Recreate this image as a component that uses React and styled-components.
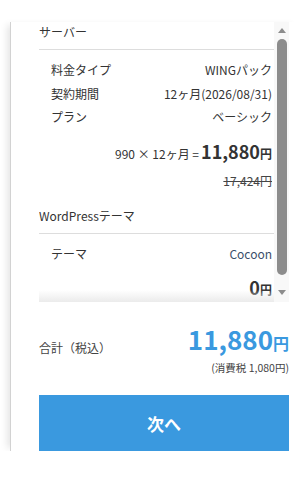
import React from "react";
import styled, { createGlobalStyle } from "styled-components";

const GlobalStyle = createGlobalStyle`
	html, body {
		margin: 0;
		padding: 0;
		background: #fff;
	}
	body {
		font-family: "Noto Sans CJK JP", "Noto Sans", sans-serif;
		color: #333;
		overflow: hidden;
		padding-top: 22px;
	}
`;

const Panel = styled.div`
	margin-left: 10px;
	width: 290px;
	box-sizing: border-box;
	padding: 0 11px 0 28px;
	border-left: 1px solid #d2d2d2;
	box-shadow: -6px 0 7px -3px rgba(0, 0, 0, 0.1);
	display: flex;
	flex-direction: column;
`;

const ScrollWrap = styled.div`
	display: flex;
	height: 280px;
`;

const Viewport = styled.div`
	position: relative;
	flex: 1;
	overflow: hidden;
`;

const Fade = styled.div`
	position: absolute;
	left: 0;
	right: 0;
	bottom: 0;
	height: 12px;
	background: linear-gradient(to bottom, rgba(235, 235, 235, 0), #ebebeb);
	pointer-events: none;
`;

const Track = styled.div`
	width: 15px;
	background: #f8f8f8;
	display: flex;
	flex-direction: column;
	align-items: center;
`;

const Arrow = styled.div`
	width: 0;
	height: 0;
	border-left: 4.5px solid transparent;
	border-right: 4.5px solid transparent;
	${(p) =>
		p.$down
			? "border-top: 5px solid #8c8c8c; margin-top: auto; margin-bottom: 7px;"
			: "border-bottom: 5px solid #8c8c8c; margin-top: 6px;"}
`;

const Thumb = styled.div`
	margin-top: 6px;
	width: 10px;
	height: 236px;
	border-radius: 5px;
	background: #8c8c8c;
`;

const Section = styled.section`
	margin-top: ${(p) => p.$top || 0}px;
`;

const SectionTitle = styled.div`
	font-size: 12px;
	line-height: 20px;
	padding-bottom: 7px;
	border-bottom: 1px solid #ddd;
`;

const Rows = styled.div`
	padding: 8px 2px 0 12px;
`;

const Row = styled.div`
	display: flex;
	justify-content: space-between;
	font-size: 12px;
	line-height: 23.5px;
`;

const Value = styled.span`
	color: ${(p) => (p.$accent ? "#3b4f6b" : "#333")};
`;

const PriceLine = styled.div`
	text-align: right;
	padding-right: 2px;
	margin-top: ${(p) => p.$top || 0}px;
	line-height: 24px;
	font-size: 12px;
`;

const Formula = styled.span`
	font-size: 12px;
	margin-right: 2px;
`;

const Amount = styled.span`
	font-size: 18px;
	font-weight: 700;
`;

const Yen = styled.span`
	font-size: 12px;
	font-weight: 700;
	line-height: 1;
`;

const OldPrice = styled.div`
	text-align: right;
	padding-right: 2px;
	margin-top: 7px;
	font-size: 12px;
	line-height: 16px;
	text-decoration: line-through;
	color: #444;
`;

const Total = styled.div`
	display: flex;
	justify-content: space-between;
	align-items: center;
	margin-top: 21px;
`;

const TotalLabel = styled.div`
	font-size: 12px;
	color: #444;
	margin-top: -5px;
`;

const TotalRight = styled.div`
	text-align: right;
`;

const BigPrice = styled.div`
	color: #3a99df;
	font-weight: 700;
	line-height: 32px;
	font-size: 26px;
`;

const BigYen = styled.span`
	font-size: 16px;
	line-height: 1;
`;

const Tax = styled.div`
	margin-top: 4px;
	font-size: 10.5px;
	line-height: 18px;
	color: #444;
`;

const NextButton = styled.button`
	margin-top: 18px;
	height: 56px;
	width: 100%;
	flex-shrink: 0;
	border: none;
	background: #3a99df;
	color: #fff;
	font-family: inherit;
	font-size: 17px;
	font-weight: 700;
	cursor: pointer;
`;

export default function App() {
	return (
		<>
			<GlobalStyle />
			<Panel>
				<ScrollWrap>
					<Viewport>
						<Section>
							<SectionTitle>サーバー</SectionTitle>
							<Rows>
								<Row>
									<span>料金タイプ</span>
									<Value>WINGパック</Value>
								</Row>
								<Row>
									<span>契約期間</span>
									<Value>12ヶ月(2026/08/31)</Value>
								</Row>
								<Row>
									<span>プラン</span>
									<Value>ベーシック</Value>
								</Row>
							</Rows>
							<PriceLine $top={10.5}>
								<Formula>990 × 12ヶ月 =</Formula>
								<Amount>11,880</Amount>
								<Yen>円</Yen>
							</PriceLine>
							<OldPrice>17,424円</OldPrice>
						</Section>
						<Section $top={17}>
							<SectionTitle>WordPressテーマ</SectionTitle>
							<Rows>
								<Row>
									<span>テーマ</span>
									<Value $accent>Cocoon</Value>
								</Row>
							</Rows>
							<PriceLine $top={9.5}>
								<Amount>0</Amount>
								<Yen>円</Yen>
							</PriceLine>
						</Section>
						<Fade />
					</Viewport>
					<Track>
						<Arrow />
						<Thumb />
						<Arrow $down />
					</Track>
				</ScrollWrap>
				<Total>
					<TotalLabel>合計（税込）</TotalLabel>
					<TotalRight>
						<BigPrice>
							11,880<BigYen>円</BigYen>
						</BigPrice>
						<Tax>(消費税 1,080円)</Tax>
					</TotalRight>
				</Total>
				<NextButton>次へ</NextButton>
			</Panel>
		</>
	);
}
